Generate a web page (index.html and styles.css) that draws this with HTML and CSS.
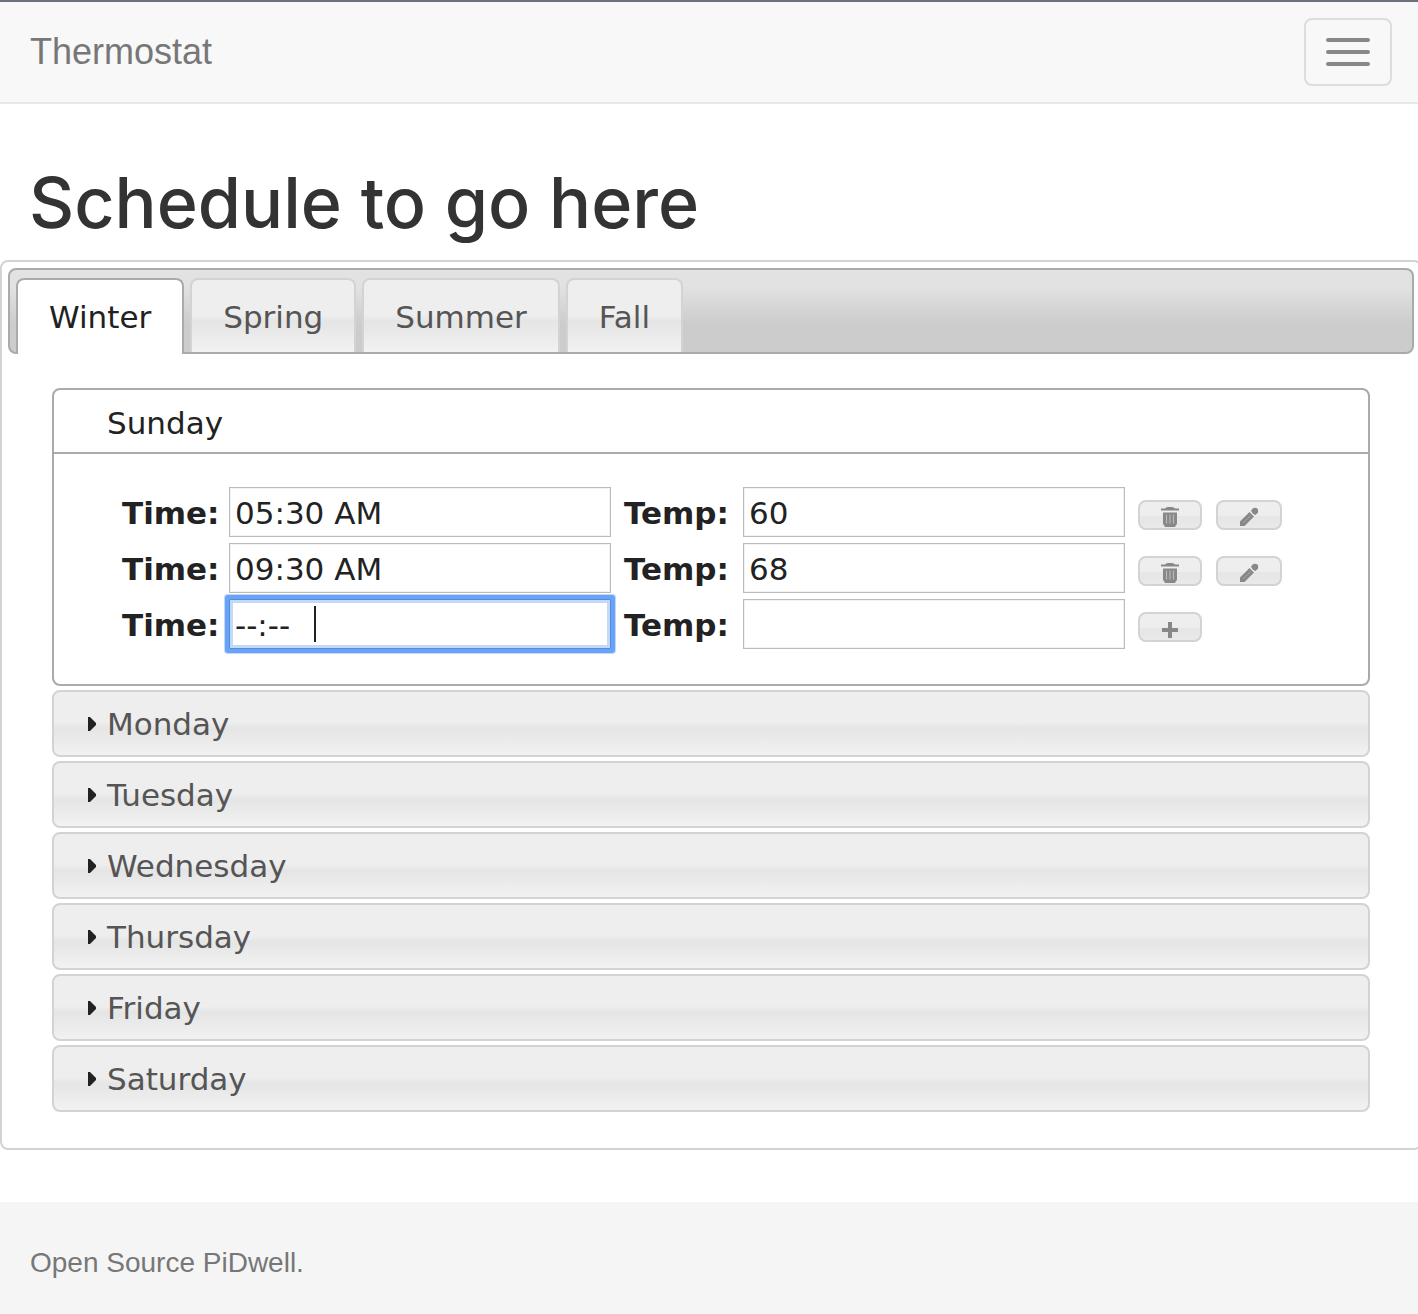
FILE: index.html
```html
<!DOCTYPE html>
<html lang="en">
<head>
<meta charset="utf-8">
<meta name="viewport" content="width=device-width, initial-scale=1">
<title>Thermostat</title>
<link rel="stylesheet" href="styles.css">
</head>
<body>
<svg class="sprite" aria-hidden="true">
  <symbol id="trash" viewBox="0 0 20 22">
    <path d="M5 2.500Q6 1 8 1h4q2 0 3 1.500h4v2H1v-2z"/>
    <path d="M3 6.500h14v11q0 1-1 1.500l-1 2H5l-1-2q-1-.5-1-1.500z"/>
    <path d="M6.500 8.500v9M10 8.500v9M13.500 8.500v9" stroke="#b8b8b8" stroke-width="1.200"/>
  </symbol>
  <symbol id="pencil" viewBox="0 0 20 20">
    <path d="M1 19v-4.500L10.500 5 15 9.500 5.500 19zM11.800 3.800l1-1 4.400 4.400-1 1z"/>
    <circle cx="16" cy="4" r="3.200"/>
    <path d="M4.500 15.500l7-7" stroke="#b5b5b5" stroke-dasharray="2 1"/>
  </symbol>
  <symbol id="plus" viewBox="0 0 18 18">
    <path d="M7 1h4v6h6v4h-6v6H7v-6H1V7h6z"/>
  </symbol>
  <symbol id="arrow" viewBox="0 0 10 16">
    <path d="M1 1h2l6 6v2l-6 6H1z"/>
  </symbol>
</svg>

<header class="navbar">
  <a class="brand" href="#">Thermostat</a>
  <button class="toggle" type="button" aria-label="Toggle navigation">
    <span class="bar"></span><span class="bar"></span><span class="bar"></span>
  </button>
</header>

<main>
  <h1 class="title">Schedule to go here</h1>
  <section class="seasons">
    <nav class="tabs" aria-label="Seasons">
      <a class="tab active" href="#winter">Winter</a>
      <a class="tab" href="#spring">Spring</a>
      <a class="tab" href="#summer">Summer</a>
      <a class="tab" href="#fall">Fall</a>
    </nav>
    <div class="days" id="winter">
      <div class="open-day">
        <h3 class="heading"><button class="day-open" type="button" aria-expanded="true">Sunday</button></h3>
        <form class="entries">
          <div class="entry">
            <label class="label" for="time1">Time:</label>
            <input class="field" id="time1" type="text" value="05:30 AM">
            <label class="label temp" for="temp1">Temp:</label>
            <input class="field" id="temp1" type="text" value="60">
            <div class="actions">
              <button class="action" type="button" aria-label="Delete"><svg class="icon trash"><use href="#trash"/></svg></button>
              <button class="action edit" type="button" aria-label="Edit"><svg class="icon"><use href="#pencil"/></svg></button>
            </div>
          </div>
          <div class="entry">
            <label class="label" for="time2">Time:</label>
            <input class="field" id="time2" type="text" value="09:30 AM">
            <label class="label temp" for="temp2">Temp:</label>
            <input class="field" id="temp2" type="text" value="68">
            <div class="actions">
              <button class="action" type="button" aria-label="Delete"><svg class="icon trash"><use href="#trash"/></svg></button>
              <button class="action edit" type="button" aria-label="Edit"><svg class="icon"><use href="#pencil"/></svg></button>
            </div>
          </div>
          <div class="entry">
            <label class="label" for="time3">Time:</label>
            <div class="editing">
              <input class="field focused" id="time3" type="text" value="--:--">
              <span class="caret"></span>
            </div>
            <label class="label temp" for="temp3">Temp:</label>
            <input class="field" id="temp3" type="text">
            <div class="actions">
              <button class="action" type="button" aria-label="Add"><svg class="icon plus"><use href="#plus"/></svg></button>
            </div>
          </div>
        </form>
      </div>
      <h3 class="heading"><button class="day" type="button"><svg class="arrow"><use href="#arrow"/></svg>Monday</button></h3>
      <h3 class="heading"><button class="day" type="button"><svg class="arrow"><use href="#arrow"/></svg>Tuesday</button></h3>
      <h3 class="heading"><button class="day" type="button"><svg class="arrow"><use href="#arrow"/></svg>Wednesday</button></h3>
      <h3 class="heading"><button class="day" type="button"><svg class="arrow"><use href="#arrow"/></svg>Thursday</button></h3>
      <h3 class="heading"><button class="day" type="button"><svg class="arrow"><use href="#arrow"/></svg>Friday</button></h3>
      <h3 class="heading"><button class="day" type="button"><svg class="arrow"><use href="#arrow"/></svg>Saturday</button></h3>
    </div>
  </section>
</main>

<footer class="footer">Open Source PiDwell.</footer>
</body>
</html>
```
FILE: styles.css
```css
* {
  box-sizing: border-box;
}

body {
  margin: 0;
  overflow-x: hidden;
  background: #fff;
  color: #333;
  font-family: "Liberation Sans", Arial, sans-serif;
}

button,
input {
  font: inherit;
  color: inherit;
}

.sprite {
  display: none;
}

.navbar {
  display: flex;
  align-items: center;
  justify-content: space-between;
  height: 104px;
  padding: 0 26px 0 30px;
  background: #f8f8f8;
  border-top: 2px solid #6b707d;
  border-bottom: 2px solid #e7e7e7;
}

.brand {
  color: #777;
  font-size: 36px;
  line-height: 40px;
  text-decoration: none;
}

.toggle {
  display: flex;
  flex-direction: column;
  align-items: center;
  justify-content: center;
  gap: 8px;
  width: 88px;
  height: 68px;
  padding: 0;
  background: transparent;
  border: 2px solid #ddd;
  border-radius: 8px;
}

.bar {
  width: 44px;
  height: 4px;
  border-radius: 2px;
  background: #888;
}

.title {
  margin: 0;
  padding: 59px 29px 17px;
  font-family: Inter, "Liberation Sans", sans-serif;
  font-size: 70px;
  font-weight: 500;
  line-height: 80px;
}

/* The panel runs slightly past the right edge of the window. */
.seasons {
  margin-right: -4px;
  padding: 6px;
  border: 2px solid #d3d3d3;
  border-radius: 8px;
  font-family: "DejaVu Sans", Verdana, sans-serif;
  font-size: 31px;
  line-height: 40px;
}

.tabs {
  display: flex;
  gap: 6px;
  height: 86px;
  padding: 8px 6px 0;
  border: 2px solid #aaa;
  border-radius: 8px;
  background: linear-gradient(#e2e2e2 20%, #ccc 66%);
}

.tab {
  height: 74px;
  padding: 17px 31px 0;
  border: 2px solid #d3d3d3;
  border-bottom: 0;
  border-radius: 8px 8px 0 0;
  background: linear-gradient(#eee 48%, #e5e5e5 58%, #f2f2f2);
  color: #555;
  text-decoration: none;
}

.tab.active {
  height: 76px;
  border-color: #aaa;
  background: #fff;
  color: #212121;
}

.days {
  display: flex;
  flex-direction: column;
  gap: 4px;
  padding: 34px 44px 30px;
}

.open-day {
  border: 2px solid #aaa;
  border-radius: 8px;
  color: #222;
}

.heading {
  margin: 0;
  font-size: 31px;
  font-weight: 400;
}

.day-open {
  display: block;
  width: 100%;
  height: 64px;
  padding: 3px 53px 0;
  border: 0;
  border-bottom: 2px solid #aaa;
  background: transparent;
  text-align: left;
}

.entries {
  display: flex;
  flex-direction: column;
  gap: 6px;
  padding: 33px 68px 35px;
}

.entry {
  display: grid;
  grid-template-columns: 107px minmax(0, 382px) 132px minmax(0, 382px) 144px;
  align-items: center;
}

.label {
  padding-top: 2px;
  font-weight: 700;
}

.temp {
  padding-left: 13px;
}

.field {
  display: block;
  width: 100%;
  height: 50px;
  padding: 2px 5px 0;
  border: 1px solid #bbb;
  border-radius: 0;
  background: #fff;
  box-shadow: inset 0 0 0 1px #f2f2f2;
}

.editing {
  position: relative;
}

.focused {
  border-color: #4f8de0;
  border-radius: 1px;
  box-shadow: inset 0 0 0 3px #c2d9fa, 0 0 0 4px #6aa3f6, 0 0 0 5px #c2d9fa;
}

.caret {
  position: absolute;
  top: 7px;
  left: 85px;
  width: 2px;
  height: 36px;
  background: #222;
}

.actions {
  display: flex;
  gap: 14px;
  padding: 6px 0 0 13px;
}

.action {
  display: flex;
  flex: none;
  align-items: flex-end;
  justify-content: center;
  width: 64px;
  height: 30px;
  padding: 0 0 1px;
  border: 2px solid #d3d3d3;
  border-radius: 8px;
  background: linear-gradient(#eee 48%, #e6e6e6 58%, #e9e9e9);
}

.edit {
  width: 66px;
}

.icon {
  width: 20px;
  height: 20px;
  fill: #888;
}

.trash {
  height: 22px;
  margin-bottom: -1px;
}

.plus {
  width: 18px;
  height: 18px;
}

.day {
  display: flex;
  align-items: center;
  gap: 10px;
  width: 100%;
  height: 67px;
  padding: 1px 33px 0;
  border: 2px solid #d3d3d3;
  border-radius: 8px;
  background: linear-gradient(#eee 48%, #e5e5e5 58%, #f2f2f2);
  color: #555;
}

.arrow {
  width: 10px;
  height: 16px;
  fill: #222;
}

.footer {
  min-height: 112px;
  margin-top: 52px;
  padding: 41px 30px 31px;
  background: #f5f5f5;
  color: #777;
  font-size: 28px;
  line-height: 40px;
}
```
